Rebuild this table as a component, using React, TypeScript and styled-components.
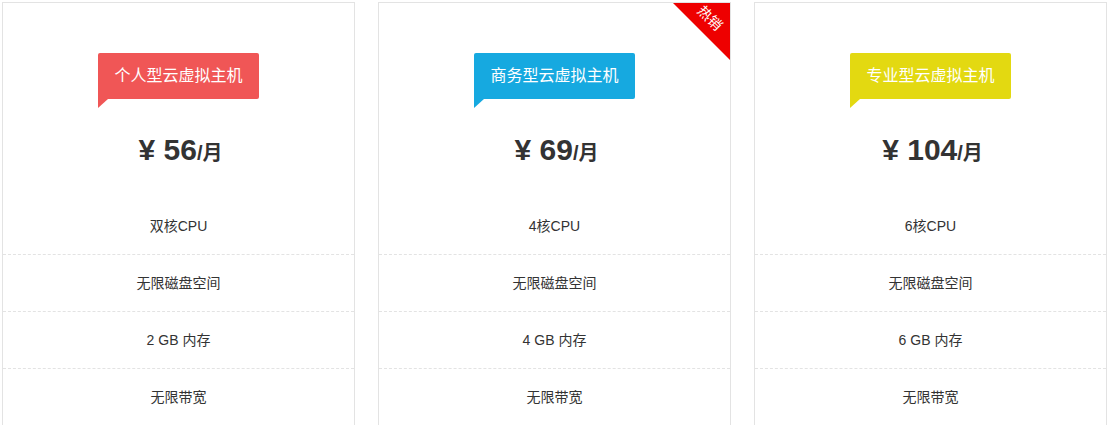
import React from 'react';
import styled, { createGlobalStyle } from 'styled-components';

type Plan = {
  name: string;
  color: string;
  price: string;
  cpu: string;
  ram: string;
  hot?: boolean;
};

const plans: Plan[] = [
  { name: '个人型云虚拟主机', color: '#f05656', price: '56', cpu: '双核CPU', ram: '2 GB 内存' },
  { name: '商务型云虚拟主机', color: '#16a9e0', price: '69', cpu: '4核CPU', ram: '4 GB 内存', hot: true },
  { name: '专业型云虚拟主机', color: '#e3d911', price: '104', cpu: '6核CPU', ram: '6 GB 内存' },
];

const GlobalStyle = createGlobalStyle`
  html, body {
    margin: 0;
    padding: 0;
    background: #fff;
    overflow: hidden;
  }
  body {
    font-family: "Liberation Sans", "Noto Sans CJK SC", sans-serif;
    color: #333;
  }
`;

const App: React.FC = () => {
  return (
    <>
      <GlobalStyle />
      <PlanRow>
        {plans.map((plan) => (
          <Card key={plan.name}>
            {plan.hot && (
              <HotCorner>
                <HotText>热销</HotText>
              </HotCorner>
            )}
            <Badge color={plan.color}>{plan.name}</Badge>
            <Price>
              ¥ {plan.price}
              <Unit>/月</Unit>
            </Price>
            <FeatureList>
              <Feature>{plan.cpu}</Feature>
              <Feature>无限磁盘空间</Feature>
              <Feature>{plan.ram}</Feature>
              <Feature>无限带宽</Feature>
            </FeatureList>
          </Card>
        ))}
      </PlanRow>
    </>
  );
};

const PlanRow = styled.div`
  display: flex;
  gap: 23px;
  padding: 2px 0 0 2px;
`;

const Card = styled.div`
  position: relative;
  box-sizing: border-box;
  width: 353px;
  border: 1px solid #e3e3e3;
  padding-top: 50px;
  text-align: center;
  overflow: hidden;
`;

const HotCorner = styled.div`
  position: absolute;
  top: 0;
  right: 0;
  width: 0;
  height: 0;
  border-top: 57px solid #ee0000;
  border-left: 57px solid transparent;
`;

const HotText = styled.span`
  position: absolute;
  top: -50px;
  right: 0px;
  width: 40px;
  color: #fff;
  font-size: 14px;
  line-height: 16px;
  transform: rotate(45deg);
  white-space: nowrap;
`;

const Badge = styled.div<{ color: string }>`
  position: relative;
  display: inline-block;
  height: 46px;
  line-height: 46px;
  padding: 0 16px;
  border-radius: 2px 2px 2px 0;
  background: ${(p) => p.color};
  color: #fff;
  font-size: 16px;

  &::after {
    content: '';
    position: absolute;
    left: 0;
    top: 100%;
    width: 0;
    height: 0;
    border-top: 9px solid ${(p) => p.color};
    border-right: 10px solid transparent;
  }
`;

const Price = styled.div`
  margin: 33px 0 30px;
  padding-left: 4px;
  height: 36px;
  line-height: 36px;
  font-size: 30px;
  font-weight: bold;
  color: #333;
`;

const Unit = styled.span`
  font-size: 20px;
`;

const FeatureList = styled.ul`
  list-style: none;
  margin: 0;
  padding: 0 0 40px;
`;

const Feature = styled.li`
  height: 56px;
  line-height: 56px;
  font-size: 14px;
  color: #333;
  border-bottom: 1px dashed #e3e3e3;

  &:first-child {
    margin-top: 1px;
  }
`;

export default App;
